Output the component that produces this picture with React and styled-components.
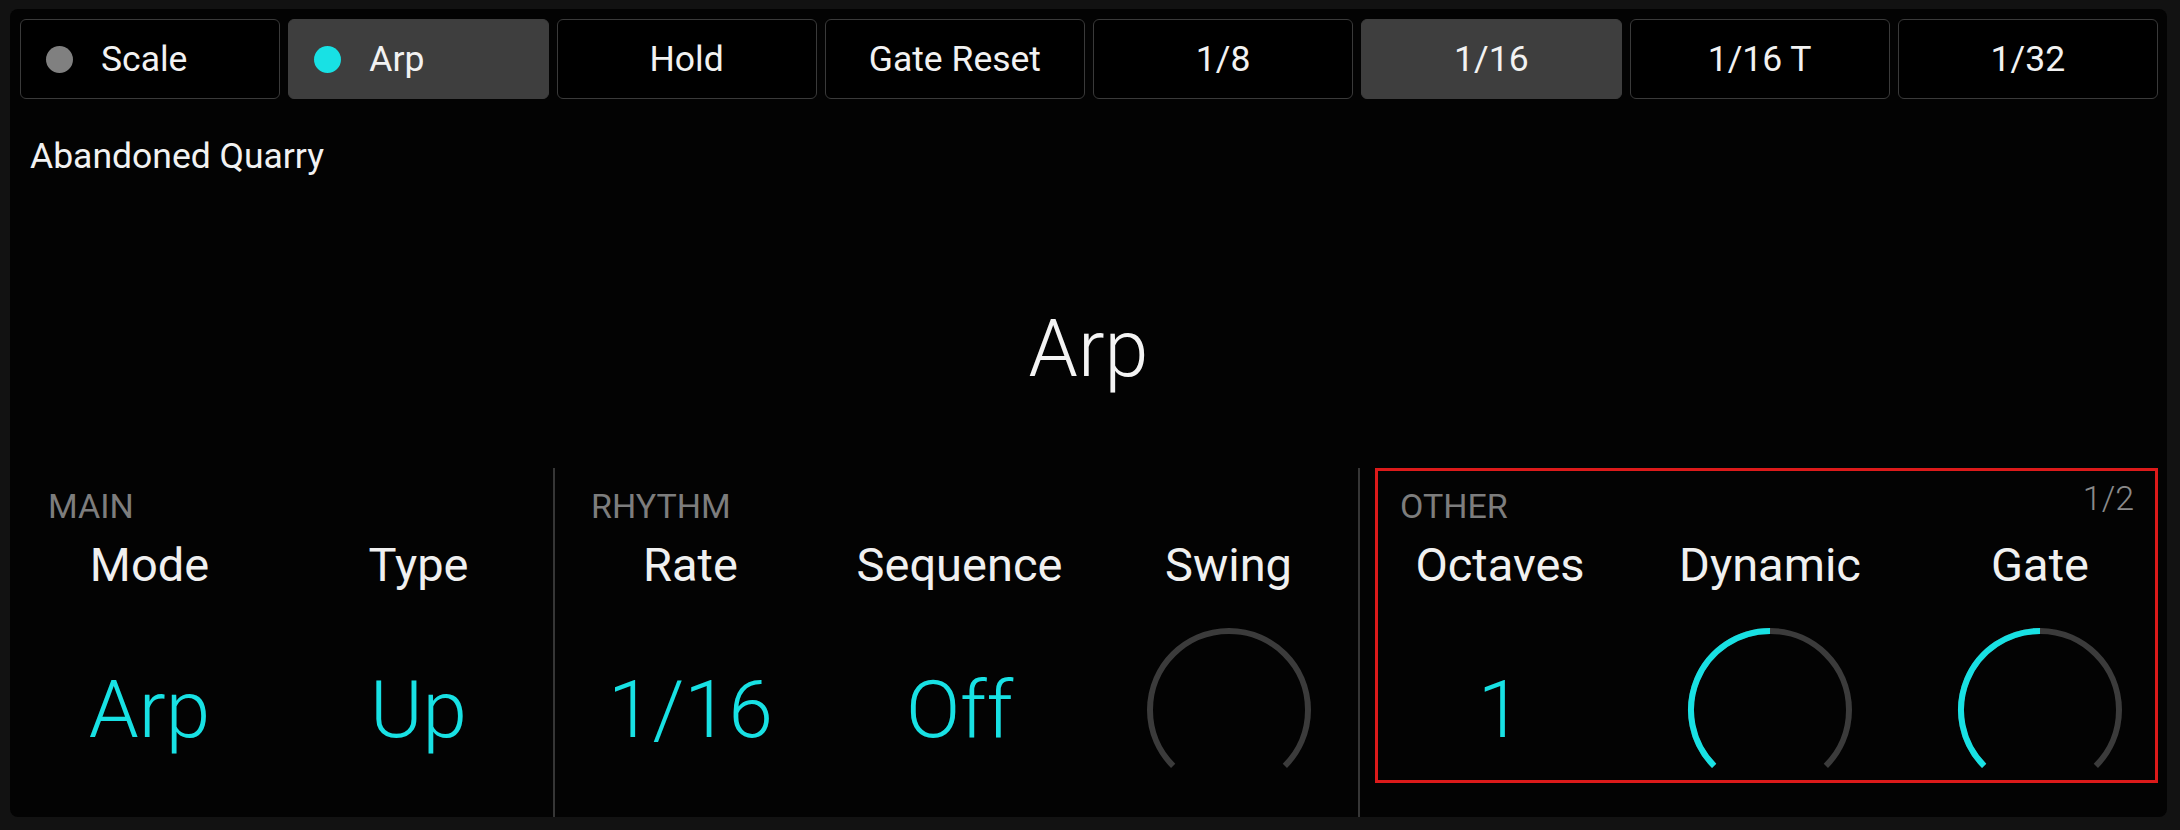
import React from "react";
import styled, { createGlobalStyle } from "styled-components";

const CYAN = "#18e1e4";

const GlobalStyle = createGlobalStyle`
  html, body {
    margin: 0;
    padding: 0;
    background: #121212;
    font-family: Roboto, "Liberation Sans", sans-serif;
  }
`;

const Screen = styled.div`
  width: 2180px;
  height: 830px;
  box-sizing: border-box;
  padding: 9px 13px 13px 10px;
`;

const Panel = styled.div`
  height: 100%;
  background: #030303;
  border-radius: 8px;
  display: flex;
  flex-direction: column;
  overflow: hidden;
`;

const ButtonRow = styled.div`
  display: grid;
  grid-template-columns: repeat(8, 1fr);
  gap: 8px;
  padding: 10px 9px 0 10px;
`;

const ModeButton = styled.div`
  height: 80px;
  box-sizing: border-box;
  border-radius: 6px;
  border: 1px solid ${(p) => (p.$active ? "#3e3e3e" : "#3a3a3a")};
  background: ${(p) => (p.$active ? "#3e3e3e" : "#000")};
  color: #f2f2f2;
  font-size: 35.5px;
  display: flex;
  align-items: center;
  justify-content: ${(p) => (p.$dot ? "flex-start" : "center")};
  padding-left: ${(p) => (p.$dot ? "25px" : "0")};
`;

const Dot = styled.span`
  width: 27px;
  height: 27px;
  border-radius: 50%;
  background: ${(p) => p.$color};
  margin-right: 28px;
  flex: none;
`;

const PresetName = styled.div`
  margin-top: 37px;
  padding-left: 20px;
  font-size: 35.5px;
  line-height: 40px;
  color: #f2f2f2;
`;

const Title = styled.div`
  margin-top: 134px;
  text-align: center;
  font-size: 79px;
  font-weight: 300;
  line-height: 78px;
  color: #f4f4f4;
`;

const SectionRow = styled.div`
  margin-top: 80px;
  display: flex;
  height: 349px;
`;

const Section = styled.div`
  position: relative;
  width: ${(p) => p.$width}px;
  flex: none;
  box-sizing: border-box;
  padding-top: 18px;
  border-left: ${(p) => (p.$divider ? "2px solid #363636" : "none")};

  ${(p) =>
    p.$selected &&
    `
    &::after {
      content: "";
      position: absolute;
      top: 0;
      left: 15px;
      right: 9px;
      bottom: 34px;
      border: 3px solid #dc1a1a;
      pointer-events: none;
    }
  `}
`;

const SectionLabel = styled.div`
  padding-left: ${(p) => p.$indent}px;
  font-size: 34px;
  line-height: 40px;
  color: #7d7d7d;
`;

const PageIndicator = styled.div`
  position: absolute;
  top: 10px;
  right: 33px;
  font-size: 34px;
  font-weight: 300;
  line-height: 40px;
  color: #8a8a8a;
`;

const ParamGrid = styled.div`
  display: grid;
  grid-template-columns: repeat(${(p) => p.$count}, ${(p) => p.$col}px);
  padding-left: ${(p) => p.$pad}px;
  margin-top: 12px;
`;

const Param = styled.div`
  display: flex;
  flex-direction: column;
  align-items: center;
`;

const ParamName = styled.div`
  font-size: 47px;
  line-height: 54px;
  color: #f0f0f0;
  white-space: nowrap;
`;

const ValueBox = styled.div`
  margin-top: 33px;
  height: 170px;
  display: flex;
  align-items: center;
  justify-content: center;
`;

const Value = styled.div`
  font-size: 80px;
  font-weight: 300;
  line-height: 80px;
  color: ${CYAN};
  white-space: nowrap;
`;

const arcPath = (cx, cy, r, a0, a1) => {
  const pt = (a) => [
    cx + r * Math.cos((a * Math.PI) / 180),
    cy + r * Math.sin((a * Math.PI) / 180),
  ];
  const [x0, y0] = pt(a0);
  const [x1, y1] = pt(a1);
  const large = a1 - a0 > 180 ? 1 : 0;
  return `M ${x0} ${y0} A ${r} ${r} 0 ${large} 1 ${x1} ${y1}`;
};

const Knob = ({ value }) => {
  const start = 135;
  const end = start + 270 * value;
  return (
    <svg width="170" height="170" viewBox="0 0 170 170">
      <path
        d={arcPath(85, 85, 79, start, start + 270)}
        fill="none"
        stroke="#3b3b3b"
        strokeWidth="6"
      />
      {value > 0 && (
        <path
          d={arcPath(85, 85, 79, start, end)}
          fill="none"
          stroke={CYAN}
          strokeWidth="6"
        />
      )}
    </svg>
  );
};

const buttons = [
  { label: "Scale", dot: "#808080" },
  { label: "Arp", dot: CYAN, active: true },
  { label: "Hold" },
  { label: "Gate Reset" },
  { label: "1/8" },
  { label: "1/16", active: true },
  { label: "1/16 T" },
  { label: "1/32" },
];

const sections = [
  {
    label: "MAIN",
    width: 543,
    indent: 38,
    pad: 5,
    col: 269,
    params: [
      { name: "Mode", value: "Arp" },
      { name: "Type", value: "Up" },
    ],
  },
  {
    label: "RHYTHM",
    width: 805,
    indent: 36,
    pad: 1,
    col: 269,
    divider: true,
    params: [
      { name: "Rate", value: "1/16" },
      { name: "Sequence", value: "Off" },
      { name: "Swing", knob: 0 },
    ],
  },
  {
    label: "OTHER",
    width: 809,
    indent: 40,
    pad: 5,
    col: 270,
    divider: true,
    selected: true,
    page: "1/2",
    params: [
      { name: "Octaves", value: "1" },
      { name: "Dynamic", knob: 0.5 },
      { name: "Gate", knob: 0.5 },
    ],
  },
];

export default function App() {
  return (
    <>
      <GlobalStyle />
      <Screen>
        <Panel>
          <ButtonRow>
            {buttons.map((b) => (
              <ModeButton key={b.label} $active={b.active} $dot={!!b.dot}>
                {b.dot && <Dot $color={b.dot} />}
                {b.label}
              </ModeButton>
            ))}
          </ButtonRow>

          <PresetName>Abandoned Quarry</PresetName>
          <Title>Arp</Title>

          <SectionRow>
            {sections.map((s) => (
              <Section
                key={s.label}
                $width={s.width}
                $divider={s.divider}
                $selected={s.selected}
              >
                <SectionLabel $indent={s.indent}>{s.label}</SectionLabel>
                {s.page && <PageIndicator>{s.page}</PageIndicator>}
                <ParamGrid $count={s.params.length} $col={s.col} $pad={s.pad}>
                  {s.params.map((p) => (
                    <Param key={p.name}>
                      <ParamName>{p.name}</ParamName>
                      <ValueBox>
                        {p.knob !== undefined ? (
                          <Knob value={p.knob} />
                        ) : (
                          <Value>{p.value}</Value>
                        )}
                      </ValueBox>
                    </Param>
                  ))}
                </ParamGrid>
              </Section>
            ))}
          </SectionRow>
        </Panel>
      </Screen>
    </>
  );
}
